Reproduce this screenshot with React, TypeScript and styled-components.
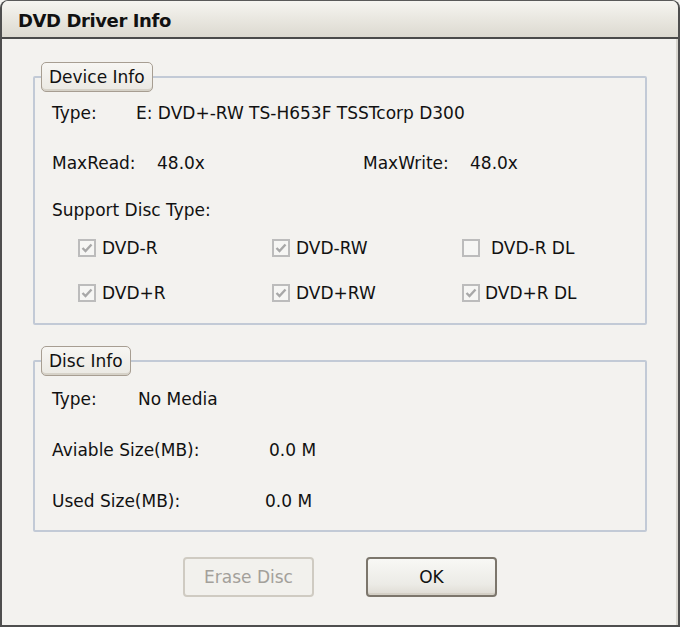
import React from "react";
import styled, { createGlobalStyle } from "styled-components";

const Global = createGlobalStyle`
  html, body { margin: 0; padding: 0; background: #f3f2ef; }
  body { font-family: "DejaVu Sans", Verdana, sans-serif; }
  * { box-sizing: border-box; }
`;

const Window = styled.div`
  width: 680px;
  height: 627px;
  display: flex;
  flex-direction: column;
  background: #f3f2ef;
  border: 2px solid #4e4e4e;
  border-top: 1px solid #5a5a5a;
  border-radius: 8px 8px 0 0;
  overflow: hidden;
`;

const TitleBar = styled.div`
  height: 38px;
  flex: none;
  display: flex;
  align-items: center;
  padding-left: 16px;
  padding-top: 2px;
  background: linear-gradient(#f6f5f1, #e9e7e0 50%, #dcd9d0);
  border-bottom: 2px solid #4a4a4a;
  font-family: "DejaVu Sans", sans-serif;
  font-weight: bold;
  font-size: 18px;
  letter-spacing: -0.4px;
  color: #111;
`;

const Body = styled.div`
  flex: 1;
  display: flex;
  flex-direction: column;
  padding: 23px 29px 0 31px;
  border-right: 2px solid #d8d6cf;
`;

const Group = styled.fieldset`
  margin: 0;
  padding: 0 0 0 17px;
  border: 2px solid #c2cad6;
  border-radius: 2px;
  min-width: 0;
`;

const Legend = styled.legend`
  margin-left: -11px;
  height: 30px;
  padding: 0 7px;
  display: flex;
  align-items: center;
  background: linear-gradient(#f7f6f3, #ebe9e3);
  border: 1px solid #a79e92;
  border-radius: 5px;
  box-shadow: inset 0 -2px 0 #d6d2c8;
  font-size: 17px;
  color: #111;
`;

const Content = styled.div<{ $top: number; $bottom: number }>`
  display: flex;
  flex-direction: column;
  padding-top: ${(p) => p.$top}px;
  padding-bottom: ${(p) => p.$bottom}px;
`;

const Row = styled.div<{ $mt?: number }>`
  height: 26px;
  display: flex;
  align-items: center;
  margin-top: ${(p) => p.$mt ?? 0}px;
  font-size: 17px;
  color: #111;
  white-space: nowrap;
`;

const Cell = styled.span<{ $w?: number }>`
  display: inline-block;
  width: ${(p) => (p.$w ? `${p.$w}px` : "auto")};
`;

const CheckGrid = styled.div<{ $mt?: number }>`
  display: grid;
  grid-template-columns: 194px 190px auto;
  padding-left: 26px;
  height: 26px;
  align-items: center;
  margin-top: ${(p) => p.$mt ?? 0}px;
`;

const CheckItem = styled.label<{ $gap: number }>`
  display: flex;
  align-items: center;
  gap: ${(p) => p.$gap}px;
  font-size: 17px;
  color: #111;
  white-space: nowrap;
`;

const Box = styled.span`
  width: 18px;
  height: 18px;
  flex: none;
  border: 2px solid #bcbcbc;
  background: #f6f6f4;
  display: flex;
  align-items: center;
  justify-content: center;
`;

const Spacer = styled.div<{ $h: number }>`
  height: ${(p) => p.$h}px;
  flex: none;
`;

const Buttons = styled.div`
  display: flex;
  justify-content: center;
  gap: 52px;
  margin-top: 25px;
`;

const Button = styled.button<{ $disabled?: boolean }>`
  width: 131px;
  height: 40px;
  border-radius: 4px;
  border: 2px solid ${(p) => (p.$disabled ? "#cfcbc2" : "#7c766c")};
  background: ${(p) =>
    p.$disabled ? "#f2f1ed" : "linear-gradient(#f8f8f5, #ecebe6 70%, #dedbd3)"};
  box-shadow: ${(p) => (p.$disabled ? "none" : "inset 0 -2px 0 #d4d0c6")};
  font-family: "DejaVu Sans", sans-serif;
  font-size: 17px;
  color: ${(p) => (p.$disabled ? "#a3a09a" : "#111")};
  padding: 0;
`;

const Check = () => (
  <svg width="12" height="12" viewBox="0 0 12 12">
    <path d="M1.5 6 L4.5 9 L10.5 2.5" fill="none" stroke="#a8a8a8" strokeWidth="2.4" />
  </svg>
);

const CB: React.FC<{ label: string; checked: boolean; gap?: number }> = ({ label, checked, gap = 6 }) => (
  <CheckItem $gap={gap}>
    <Box>{checked && <Check />}</Box>
    {label}
  </CheckItem>
);

export default function App() {
  return (
    <>
      <Global />
      <Window>
        <TitleBar>DVD Driver Info</TitleBar>
        <Body>
          <Group>
            <Legend>Device Info</Legend>
            <Content $top={8} $bottom={17}>
              <Row>
                <Cell $w={84}>Type:</Cell>
                <Cell>E: DVD+-RW TS-H653F TSSTcorp D300</Cell>
              </Row>
              <Row $mt={24}>
                <Cell $w={105}>MaxRead:</Cell>
                <Cell $w={206}>48.0x</Cell>
                <Cell $w={107}>MaxWrite:</Cell>
                <Cell>48.0x</Cell>
              </Row>
              <Row $mt={21}>Support Disc Type:</Row>
              <CheckGrid $mt={12}>
                <CB label="DVD-R" checked />
                <CB label="DVD-RW" checked />
                <CB label="DVD-R DL" checked={false} gap={11} />
              </CheckGrid>
              <CheckGrid $mt={19}>
                <CB label="DVD+R" checked />
                <CB label="DVD+RW" checked />
                <CB label="DVD+R DL" checked gap={5} />
              </CheckGrid>
            </Content>
          </Group>
          <Spacer $h={21} />
          <Group>
            <Legend>Disc Info</Legend>
            <Content $top={10} $bottom={16}>
              <Row>
                <Cell $w={86}>Type:</Cell>
                <Cell>No Media</Cell>
              </Row>
              <Row $mt={25}>
                <Cell $w={217}>Aviable Size(MB):</Cell>
                <Cell>0.0 M</Cell>
              </Row>
              <Row $mt={25}>
                <Cell $w={213}>Used Size(MB):</Cell>
                <Cell>0.0 M</Cell>
              </Row>
            </Content>
          </Group>
          <Buttons>
            <Button $disabled disabled>Erase Disc</Button>
            <Button>OK</Button>
          </Buttons>
        </Body>
      </Window>
    </>
  );
}
